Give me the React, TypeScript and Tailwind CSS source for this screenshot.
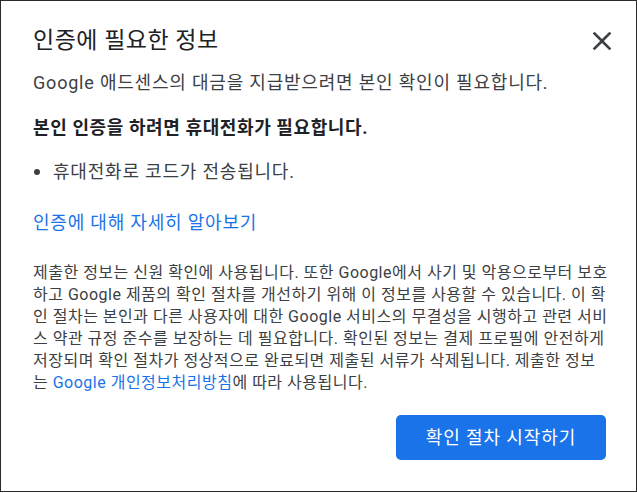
const noticeLines = [
  '제출한 정보는 신원 확인에 사용됩니다. 또한 Google에서 사기 및 악용으로부터 보호',
  '하고 Google 제품의 확인 절차를 개선하기 위해 이 정보를 사용할 수 있습니다. 이 확',
  '인 절차는 본인과 다른 사용자에 대한 Google 서비스의 무결성을 시행하고 관련 서비',
  '스 약관 규정 준수를 보장하는 데 필요합니다. 확인된 정보는 결제 프로필에 안전하게',
  '저장되며 확인 절차가 정상적으로 완료되면 제출된 서류가 삭제됩니다. 제출한 정보',
];

export default function App() {
  return (
    <div
      className="w-[637px] h-[492px] border border-[#2a2a2a] bg-white text-[#3c4043]"
      style={{ fontFamily: 'Roboto, "Noto Sans CJK KR", sans-serif' }}
    >
      <div className="pl-[32px] pr-[18px] pt-[24px]">
        {/* Header */}
        <div className="flex items-center justify-between">
          <h1 className="text-[23px] leading-[28px] tracking-[0.5px] text-[#202124]">인증에 필요한 정보</h1>
          <button className="flex h-[32px] w-[32px] items-center justify-center text-[#3c4043]">
            <svg viewBox="0 0 24 24" className="h-[32px] w-[32px]" fill="currentColor">
              <path d="M19 6.41L17.59 5 12 10.59 6.41 5 5 6.41 10.59 12 5 17.59 6.41 19 12 13.41 17.59 19 19 17.59 13.41 12z" />
            </svg>
          </button>
        </div>

        <p className="mt-[13px] text-[18px] leading-[26px] tracking-[0.8px]">
          Google 애드센스의 대금을 지급받으려면 본인 확인이 필요합니다.
        </p>

        <p className="mt-[19px] text-[18px] font-bold leading-[26px] tracking-[0.6px] text-[#202124]">
          본인 인증을 하려면 휴대전화가 필요합니다.
        </p>

        <ul className="mt-[18px] text-[18px] leading-[26px] tracking-[0.8px]">
          <li className="flex items-center">
            <span className="mr-[13px] ml-[1px] h-[6px] w-[6px] rounded-full bg-[#3c4043]" />
            휴대전화로 코드가 전송됩니다.
          </li>
        </ul>

        <a className="mt-[25px] block text-[18px] leading-[26px] tracking-[0.8px] text-[#1a73e8]">
          인증에 대해 자세히 알아보기
        </a>

        <p className="mt-[26px] text-[16px] leading-[22px] tracking-[0.5px]">
          {noticeLines.map((line) => (
            <span key={line} className="block whitespace-nowrap">
              {line}
            </span>
          ))}
          <span className="block whitespace-nowrap">
            는 <a className="text-[#1a73e8]">Google 개인정보처리방침</a>에 따라 사용됩니다.
          </span>
        </p>

        <div className="mt-[21px] flex justify-end pr-[12px]">
          <button className="h-[45px] w-[210px] rounded-[5px] bg-[#1a73e8] text-[18px] tracking-[0.9px] text-white">
            확인 절차 시작하기
          </button>
        </div>
      </div>
    </div>
  );
}
